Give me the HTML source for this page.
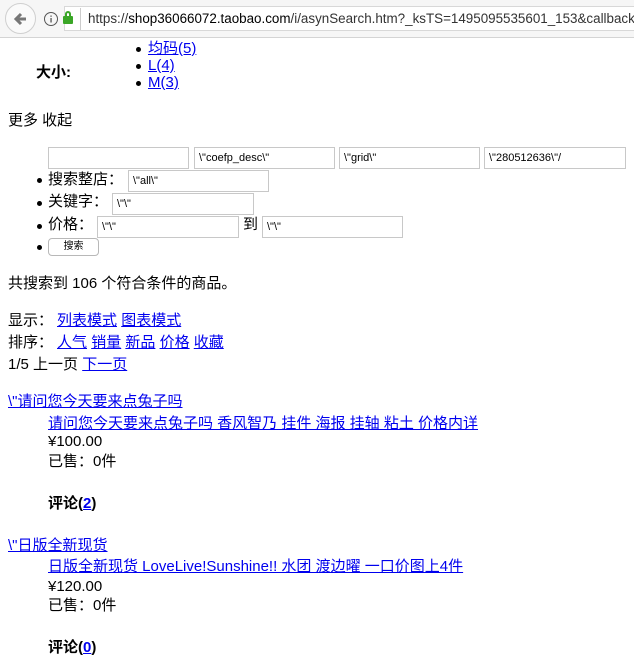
<!DOCTYPE html>
<html><head><meta charset="utf-8"><style>
*{margin:0;padding:0;box-sizing:border-box}
body{width:634px;height:666px;overflow:hidden;background:#fff;font-family:"Liberation Sans","Noto Sans CJK SC",sans-serif;font-size:15px;color:#000;position:relative}
.t{position:absolute;white-space:nowrap;line-height:18px}
a{color:#00e;text-decoration:underline}
.bar{position:absolute;left:0;top:0;width:634px;height:38px;background:#f6f6f6;border-bottom:1px solid #d4d4d4;overflow:hidden}
.url{position:absolute;left:64px;top:6px;width:580px;height:25px;background:#fff;border:1px solid #d8d8d8;border-right:none}
.back{position:absolute;left:5px;top:3px;width:31px;height:31px;border-radius:50%;background:#fafafa;border:1px solid #cfcfcf}
.inp{position:absolute;height:22px;border:1px solid #c8c8c8;font-size:11px;line-height:20px;padding-left:4px;white-space:nowrap;overflow:hidden}
.dot{position:absolute;width:5px;height:5px;border-radius:50%;background:#000}
.btn{position:absolute;left:48px;top:238px;width:51px;height:18px;border:1px solid #b8b8b8;border-radius:4px;font-size:10px;text-align:center;line-height:16px;background:#fff}
b{font-weight:bold}
</style></head><body>
<div class="bar">
<div class="url"></div>
<div class="back"></div>
<svg style="position:absolute;left:11px;top:9px" width="20" height="20" viewBox="0 0 20 20"><path d="M15 10H6M10 5L5 10l5 5" stroke="#777" stroke-width="3" fill="none"/></svg>
<svg style="position:absolute;left:43px;top:11px" width="16" height="16" viewBox="0 0 16 16"><circle cx="8" cy="8" r="6.5" stroke="#555" fill="none"/><rect x="7.4" y="7" width="1.3" height="4.5" fill="#555"/><rect x="7.4" y="4.5" width="1.3" height="1.3" fill="#555"/></svg>
<div style="position:absolute;left:63px;top:16px;width:10px;height:8px;background:#3aa626;border-radius:1px"></div>
<div style="position:absolute;left:65px;top:11px;width:6px;height:7px;border:2px solid #3aa626;border-bottom:none;border-radius:3px 3px 0 0"></div>
<div style="position:absolute;left:80px;top:8px;width:1px;height:22px;background:#ccc"></div>
<div class="t" style="left:88px;top:10px;font-size:13.4px;color:#333">https://<span style="color:#000">shop36066072.taobao.com</span>/i/asynSearch.htm?_ksTS=1495095535601_153&amp;callback=json</div>
</div>

<div class="t" style="left:36px;top:64px"><b>大小:</b></div>
<div class="dot" style="left:136px;top:47px"></div><div class="t" style="left:148px;top:40px"><a>均码(5)</a></div>
<div class="dot" style="left:136px;top:64px"></div><div class="t" style="left:148px;top:57px"><a>L(4)</a></div>
<div class="dot" style="left:136px;top:81px"></div><div class="t" style="left:148px;top:74px"><a>M(3)</a></div>

<div class="t" style="left:8px;top:112px">更多 收起</div>

<div class="inp" style="left:48px;top:147px;width:141px"></div>
<div class="inp" style="left:194px;top:147px;width:141px">\"coefp_desc\"</div>
<div class="inp" style="left:339px;top:147px;width:141px">\"grid\"</div>
<div class="inp" style="left:484px;top:147px;width:142px">\"280512636\"/</div>

<div class="dot" style="left:37px;top:178px"></div><div class="t" style="left:48px;top:171px">搜索整店：</div>
<div class="inp" style="left:128px;top:170px;width:141px">\"all\"</div>
<div class="dot" style="left:37px;top:201px"></div><div class="t" style="left:48px;top:193px">关键字：</div>
<div class="inp" style="left:112px;top:193px;width:142px">\"\"</div>
<div class="dot" style="left:37px;top:224px"></div><div class="t" style="left:48px;top:216px">价格：</div>
<div class="inp" style="left:97px;top:216px;width:142px">\"\"</div>
<div class="t" style="left:243px;top:216px">到</div>
<div class="inp" style="left:262px;top:216px;width:141px">\"\"</div>
<div class="dot" style="left:37px;top:245px"></div><div class="btn">搜索</div>

<div class="t" style="left:8px;top:275px">共搜索到 106 个符合条件的商品。</div>
<div class="t" style="left:8px;top:312px">显示：</div><div class="t" style="left:57px;top:312px"><a>列表模式</a> <a>图表模式</a></div>
<div class="t" style="left:8px;top:334px">排序：</div><div class="t" style="left:57px;top:334px"><a>人气</a> <a>销量</a> <a>新品</a> <a>价格</a> <a>收藏</a></div>
<div class="t" style="left:8px;top:356px">1/5 上一页 <a>下一页</a></div>

<div class="t" style="left:8px;top:393px"><a>\"请问您今天要来点兔子吗</a></div>
<div class="t" style="left:48px;top:415px"><a>请问您今天要来点兔子吗 香风智乃 挂件 海报 挂轴 粘土 价格内详</a></div>
<div class="t" style="left:48px;top:433px">¥100.00</div>
<div class="t" style="left:48px;top:453px">已售：0件</div>
<div class="t" style="left:48px;top:495px"><b>评论(<a>2</a>)</b></div>

<div class="t" style="left:8px;top:537px"><a>\"日版全新现货</a></div>
<div class="t" style="left:48px;top:558px"><a>日版全新现货 LoveLive!Sunshine!! 水团 渡边曜 一口价图上4件</a></div>
<div class="t" style="left:48px;top:578px">¥120.00</div>
<div class="t" style="left:48px;top:597px">已售：0件</div>
<div class="t" style="left:48px;top:639px"><b>评论(<a>0</a>)</b></div>
</body></html>
